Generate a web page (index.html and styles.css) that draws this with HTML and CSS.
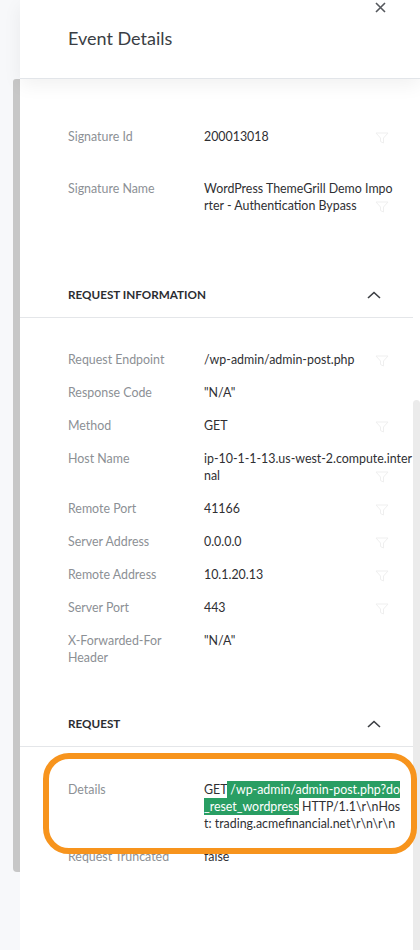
FILE: index.html
```html
<!DOCTYPE html>
<html lang="en">
<head>
<meta charset="utf-8">
<title>Event Details</title>
<link rel="stylesheet" href="styles.css">
</head>
<body>
<div class="app">
  <aside class="gutter"><div class="gutter-thumb"></div></aside>
  <main class="panel">
    <header class="panel-head">
      <button class="close" aria-label="Close">
        <svg width="11" height="11" viewBox="0 0 11 11"><path d="M1 1L10 10M10 1L1 10" stroke="#55585d" stroke-width="1.6" fill="none"/></svg>
      </button>
      <h1 class="title">Event Details</h1>
    </header>
    <div class="panel-body">
      <div class="content">
        <section class="sec sec-top">
          <div class="row"><div class="label">Signature Id</div><div class="value">200013018</div><svg class="filter" viewBox="0 0 14 12"><path d="M1 1h12L8.5 6v5L5.5 9.5V6z"/></svg></div>
          <div class="row"><div class="label">Signature Name</div><div class="value">WordPress ThemeGrill Demo Impo<br>rter - Authentication Bypass</div><svg class="filter" viewBox="0 0 14 12"><path d="M1 1h12L8.5 6v5L5.5 9.5V6z"/></svg></div>
        </section>

        <section class="sec">
          <div class="sec-head"><h2>REQUEST INFORMATION</h2><svg class="chev" viewBox="0 0 14 8"><path d="M1 7L7 1.5L13 7"/></svg></div>
          <div class="rows rows-info">
            <div class="row"><div class="label">Request Endpoint</div><div class="value">/wp-admin/admin-post.php</div><svg class="filter" viewBox="0 0 14 12"><path d="M1 1h12L8.5 6v5L5.5 9.5V6z"/></svg></div>
            <div class="row"><div class="label">Response Code</div><div class="value">"N/A"</div></div>
            <div class="row"><div class="label">Method</div><div class="value">GET</div><svg class="filter" viewBox="0 0 14 12"><path d="M1 1h12L8.5 6v5L5.5 9.5V6z"/></svg></div>
            <div class="row"><div class="label">Host Name</div><div class="value">ip-10-1-1-13.us-west-2.compute.inter<br>nal</div><svg class="filter" viewBox="0 0 14 12"><path d="M1 1h12L8.5 6v5L5.5 9.5V6z"/></svg></div>
            <div class="row"><div class="label">Remote Port</div><div class="value">41166</div><svg class="filter" viewBox="0 0 14 12"><path d="M1 1h12L8.5 6v5L5.5 9.5V6z"/></svg></div>
            <div class="row"><div class="label">Server Address</div><div class="value">0.0.0.0</div><svg class="filter" viewBox="0 0 14 12"><path d="M1 1h12L8.5 6v5L5.5 9.5V6z"/></svg></div>
            <div class="row"><div class="label">Remote Address</div><div class="value">10.1.20.13</div><svg class="filter" viewBox="0 0 14 12"><path d="M1 1h12L8.5 6v5L5.5 9.5V6z"/></svg></div>
            <div class="row"><div class="label">Server Port</div><div class="value">443</div><svg class="filter" viewBox="0 0 14 12"><path d="M1 1h12L8.5 6v5L5.5 9.5V6z"/></svg></div>
            <div class="row"><div class="label">X-Forwarded-For Header</div><div class="value">"N/A"</div></div>
          </div>
        </section>

        <section class="sec">
          <div class="sec-head"><h2>REQUEST</h2><svg class="chev" viewBox="0 0 14 8"><path d="M1 7L7 1.5L13 7"/></svg></div>
          <div class="rows rows-req">
            <div class="row"><div class="label">Details</div><div class="value">GET<span class="hl"> /wp-admin/admin-post.php?do<br>_reset_wordpress</span> HTTP/1.1\r\nHos<br>t: trading.acmefinancial.net\r\n\r\n</div></div>
            <div class="row"><div class="label">Request Truncated</div><div class="value">false</div></div>
            <div class="callout"></div>
          </div>
        </section>
      </div>
      <div class="scroll-track"><div class="scroll-thumb"></div></div>
    </div>
  </main>
</div>
</body>
</html>
```
FILE: styles.css
```css
* { box-sizing: border-box; }
html, body { margin: 0; padding: 0; }
body {
  width: 420px;
  height: 950px;
  overflow: hidden;
  background: #f7f8fa;
  font-family: Lato, "Open Sans", Arial, sans-serif;
  color: #333;
}
.app {
  display: flex;
  height: 950px;
}
.gutter {
  width: 20px;
  flex: none;
  background: #f7f8fa;
}
.gutter-thumb {
  margin: 79px 0 0 13px;
  width: 7px;
  height: 793px;
  background: #c7c7c7;
  border-radius: 3px 0 0 4px;
}
.panel {
  flex: 1;
  background: #fff;
  display: flex;
  flex-direction: column;
  min-width: 0;
}
.panel-head {
  position: relative;
  z-index: 2;
  height: 79px;
  border-bottom: 1px solid #e2e5e9;
  box-shadow: 0 6px 18px rgba(0, 0, 0, 0.06);
  background: #fff;
  display: flex;
  flex-direction: column;
}
.close {
  align-self: flex-end;
  margin: 2px 34px 0 0;
  padding: 0;
  border: 0;
  background: none;
  width: 11px;
  height: 11px;
  display: flex;
}
.title {
  margin: 14px 0 0 48px;
  font-size: 18px;
  line-height: 22px;
  font-weight: 400;
  color: #3a3e44;
}
.panel-body {
  flex: 1;
  display: flex;
  min-height: 0;
}
.content {
  flex: 1;
  min-width: 0;
}
.scroll-track {
  width: 7px;
  flex: none;
  display: flex;
  flex-direction: column;
}
.scroll-thumb {
  margin-top: 321px;
  flex: 1;
  background: #ebebeb;
  border-radius: 4px 4px 0 0;
}
.sec-top {
  padding: 41px 0 52px;
  display: flex;
  flex-direction: column;
  gap: 19px;
}
.row {
  display: grid;
  grid-template-columns: 136px 185px;
  padding: 8px 0 8px 48px;
  font-size: 12.4px;
  line-height: 17px;
}
.label {
  color: #8c9095;
  grid-column: 1;
  grid-row: 1;
  padding-right: 10px;
}
.value {
  color: #2f2f33;
  grid-column: 2;
  grid-row: 1;
  white-space: nowrap;
}
.filter {
  grid-column: 2;
  grid-row: 1;
  justify-self: end;
  align-self: end;
  width: 14px;
  height: 12px;
  margin-bottom: 1px;
  fill: none;
  stroke: #efefef;
  stroke-width: 1;
  stroke-linejoin: round;
}
.sec-head {
  display: flex;
  justify-content: space-between;
  align-items: center;
  padding: 12px 32px 14px 48px;
  border-bottom: 1px solid #e4e6e9;
}
.sec-head h2 {
  margin: 0;
  font-size: 11.7px;
  line-height: 17px;
  font-weight: 700;
  color: #2b2d31;
}
.chev {
  width: 14px;
  height: 8px;
  fill: none;
  stroke: #3a3d42;
  stroke-width: 1.6;
}
.rows-info {
  padding: 25px 0 29px;
}
.rows-req {
  position: relative;
  padding: 26px 0 0;
}
.hl {
  background: #299e63;
  color: #fff;
  padding: 1.4px 0;
}
.callout {
  position: absolute;
  left: 23px;
  top: 6px;
  width: 374px;
  height: 101px;
  border: 6px solid #f7941d;
  border-radius: 26px;
  pointer-events: none;
}
```
